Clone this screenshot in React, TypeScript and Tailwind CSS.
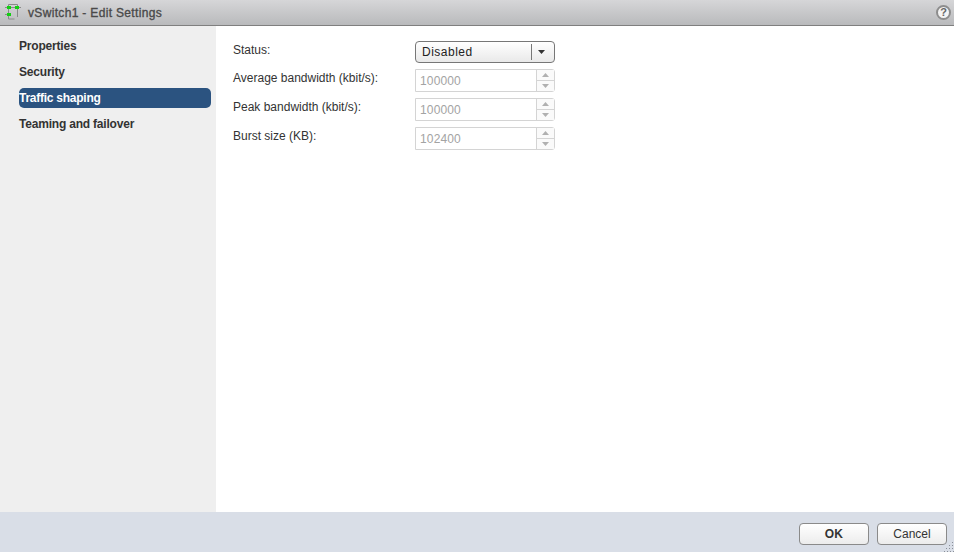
const navItems = ["Properties", "Security", "Traffic shaping", "Teaming and failover"];

const fields = [
  { label: "Average bandwidth (kbit/s):", value: "100000" },
  { label: "Peak bandwidth (kbit/s):", value: "100000" },
  { label: "Burst size (KB):", value: "102400" },
];

const SwitchIcon = () => (
  <svg width="16" height="16" viewBox="0 0 16 16" className="mb-[2px] shrink-0">
    <path d="M0 3.5h16M0 10.5h5M3.5 0.5h9M3.5 0.5v14.5h6M12.5 0.5v12.5" fill="none" stroke="#8a8a8a" strokeWidth="1" />
    <rect x="2" y="2" width="4" height="3" fill="#12d012" />
    <rect x="10" y="2" width="4" height="3" fill="#12d012" />
    <rect x="2" y="9" width="4" height="3" fill="#12d012" />
  </svg>
);

const Spinner = ({ value }: { value: string }) => (
  <div className="flex h-[23px] w-[140px] border border-[#d4d4d4] rounded-r-[3px] bg-white">
    <div className="flex-1 pl-[4px] pt-[2px] text-[12px] leading-[18px] tracking-[0.15px] text-[#a3a3a3]">{value}</div>
    <div className="flex w-[18px] flex-col border-l border-[#d4d4d4] bg-[#fafafa]">
      <div className="flex h-[11px] items-center justify-center border-b border-[#d4d4d4]">
        <svg width="7" height="4" viewBox="0 0 7 4"><path d="M3.5 0L7 4H0z" fill="#b0b0b0" /></svg>
      </div>
      <div className="flex flex-1 items-center justify-center">
        <svg width="7" height="4" viewBox="0 0 7 4"><path d="M0 0h7L3.5 4z" fill="#b0b0b0" /></svg>
      </div>
    </div>
  </div>
);

export default function App() {
  return (
    <div className="flex h-[552px] w-[954px] flex-col overflow-hidden bg-white font-['Liberation_Sans',Arial,sans-serif]">
      <div className="flex h-[26px] shrink-0 items-center justify-between border-b border-[#7f7f7f] bg-gradient-to-b from-[#d6d6d8] to-[#b9babc] pl-[5px] pr-[3px]">
        <div className="flex items-center gap-[7px]">
          <SwitchIcon />
          <span className="text-[12px] tracking-[0.33px] text-[#4a4a4a] [-webkit-text-stroke:0.35px_#4a4a4a]">vSwitch1 - Edit Settings</span>
        </div>
        <div className="flex h-[15px] w-[15px] items-center justify-center rounded-full border-2 border-[#8d8d8d] bg-[#f4f4f4] text-[11px] font-bold text-[#666]">?</div>
      </div>

      <div className="flex min-h-0 flex-1">
        <div className="flex w-[216px] shrink-0 flex-col gap-[6px] bg-[#efefef] pl-[19px] pr-[5px] pt-[10px]">
          {navItems.map((item) =>
            item === "Traffic shaping" ? (
              <div key={item} className="h-[20px] rounded-[5px] bg-[#2b5380] text-[12px] font-bold leading-[20px] tracking-[-0.25px] text-white">
                {item}
              </div>
            ) : (
              <div key={item} className="h-[20px] text-[12px] font-bold leading-[20px] tracking-[-0.2px] text-[#333]">
                {item}
              </div>
            ),
          )}
        </div>

        <div className="flex-1 pl-[17px] pt-[15px]">
          <div className="flex h-[28px]">
            <div className="w-[182px] pt-[1px] text-[12px] leading-[16px] text-[#333]">Status:</div>
            <div className="flex h-[22px] w-[140px] items-center rounded-[4px] border border-[#777] bg-gradient-to-b from-white to-[#e9e9e9]">
              <span className="flex-1 pl-[6px] text-[12px] tracking-[0.5px] text-[#222]">Disabled</span>
              <div className="flex h-[16px] w-[23px] items-center justify-center border-l border-[#777] pr-[3px]">
                <svg width="7" height="4" viewBox="0 0 7 4"><path d="M0 0h7L3.5 4z" fill="#333" /></svg>
              </div>
            </div>
          </div>
          <div className="flex flex-col gap-[6px]">
            {fields.map((f) => (
              <div key={f.label} className="flex">
                <div className="w-[182px] pt-[1px] text-[12px] leading-[16px] text-[#333]">{f.label}</div>
                <Spinner value={f.value} />
              </div>
            ))}
          </div>
        </div>
      </div>

      <div className="relative flex h-[40px] shrink-0 items-center justify-end gap-[8px] bg-[#d9dee7] pr-[7px] pt-[4px]">
        <button className="h-[22px] w-[70px] rounded-[4px] border border-[#8a8a8a] bg-gradient-to-b from-white to-[#ececec] text-[12px] font-bold tracking-[0.3px] text-[#333]">OK</button>
        <button className="h-[22px] w-[70px] rounded-[4px] border border-[#8a8a8a] bg-gradient-to-b from-white to-[#ececec] text-[12px] text-[#333]">Cancel</button>
        <svg width="10" height="10" viewBox="0 0 10 10" className="absolute bottom-0 right-0">
          <path d="M8 0h1v1H8zM5 3h1v1H5zM8 3h1v1H8zM2 6h1v1H2zM5 6h1v1H5zM8 6h1v1H8zM0 9h1v1H0zM3 9h1v1H3zM6 9h1v1H6zM9 9h1v1H9z" fill="#8a8f98" />
        </svg>
      </div>
    </div>
  );
}
